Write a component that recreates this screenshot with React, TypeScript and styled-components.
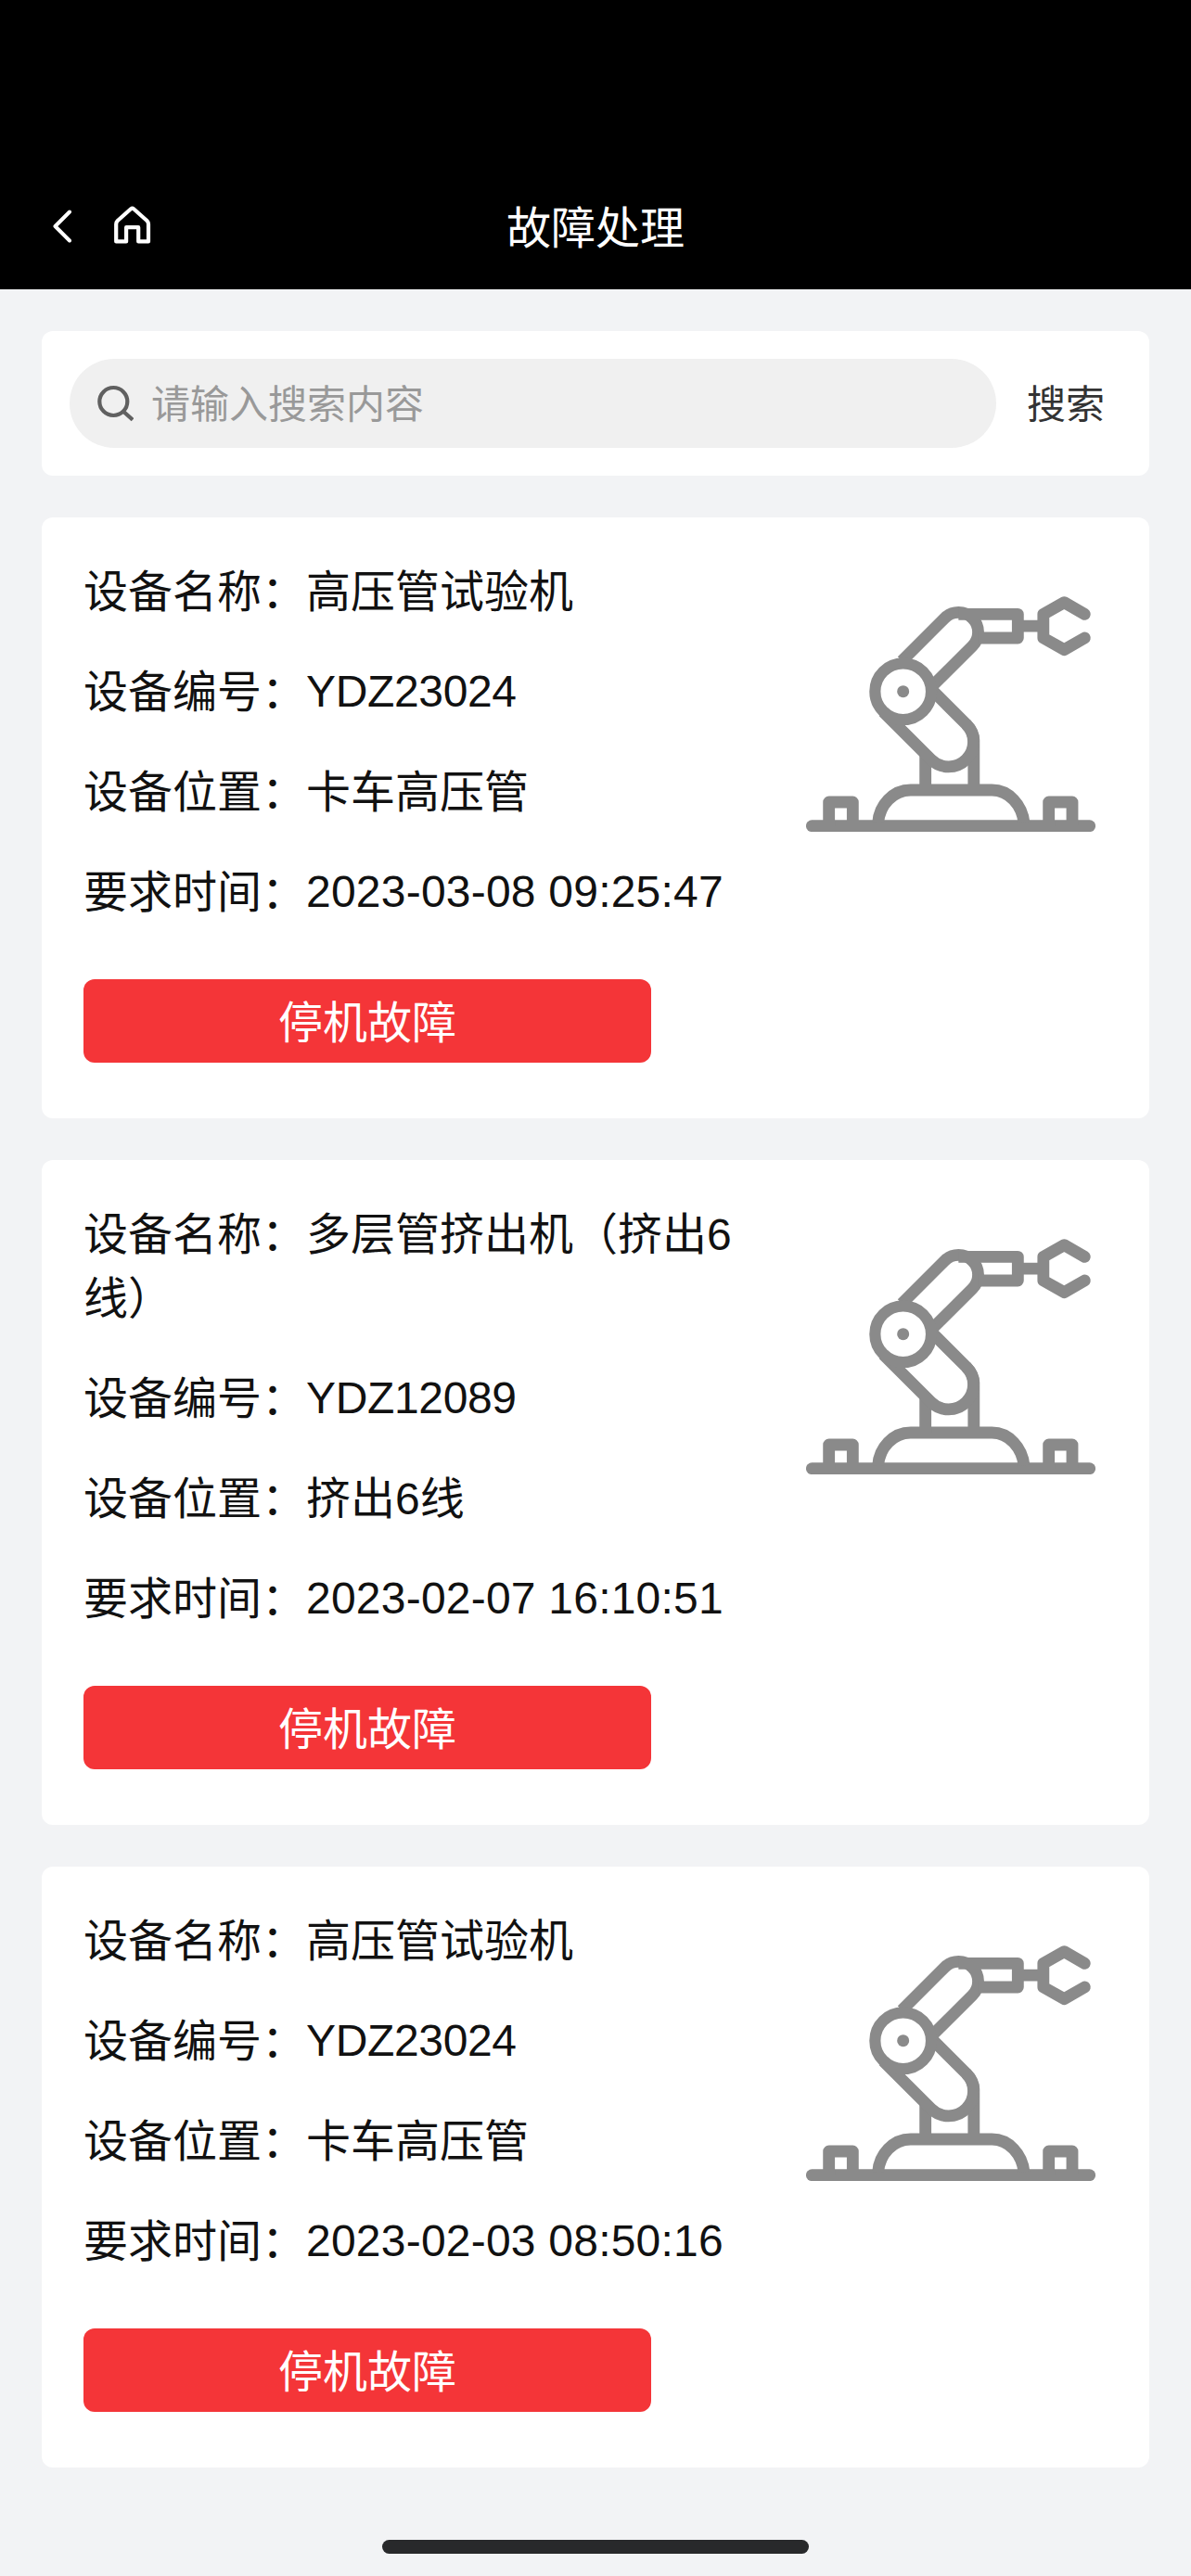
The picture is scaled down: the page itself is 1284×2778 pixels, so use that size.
import React from "react";
import styled, { createGlobalStyle } from "styled-components";

const GlobalStyle = createGlobalStyle`
  *, *::before, *::after { box-sizing: border-box; }
  body {
    margin: 0;
    background: #f2f3f5;
    font-family: "Liberation Sans", "Noto Sans CJK SC", sans-serif;
    color: #111;
  }
`;

const Page = styled.div`
  display: flex;
  flex-direction: column;
  width: 1284px;
  height: 2778px;
  background: #f2f3f5;
  overflow: hidden;
`;

const Header = styled.header`
  display: grid;
  grid-template-columns: 1fr auto 1fr;
  align-items: center;
  height: 312px;
  flex: none;
  padding: 180px 54px 0;
  background: #000;
  color: #fff;
`;

const HeaderActions = styled.nav`
  display: flex;
  align-items: center;
  gap: 41px;
  height: 132px;
  padding-bottom: 6px;
`;

const IconButton = styled.button`
  display: flex;
  padding: 0;
  border: 0;
  background: none;
  color: inherit;
`;

const Title = styled.h1`
  margin: 0;
  padding-top: 2px;
  font-size: 48px;
  font-weight: 400;
  line-height: 130px;
`;

const Content = styled.main`
  display: flex;
  flex-direction: column;
  flex: 1;
  gap: 45px;
  padding: 45px 45px 0;
`;

const Panel = styled.section`
  border-radius: 12px;
  background: #fff;
`;

const SearchPanel = styled(Panel)`
  display: flex;
  align-items: center;
  gap: 33px;
  height: 156px;
  padding: 0 48px 0 30px;
`;

const SearchField = styled.label`
  display: flex;
  align-items: center;
  flex: 1;
  gap: 19px;
  height: 96px;
  padding: 0 30px 0 27px;
  border-radius: 48px;
  background: #f0f0f0;
  color: #606060;
`;

const Placeholder = styled.span`
  padding-top: 3px;
  color: #999;
  font-size: 42px;
  line-height: 60px;
`;

const SearchButton = styled.button`
  padding: 3px 0 0;
  border: 0;
  background: none;
  color: #333;
  font: inherit;
  font-size: 42px;
  line-height: 60px;
`;

const Card = styled(Panel)`
  display: flex;
  justify-content: space-between;
  align-items: flex-start;
  padding: 45px 58px 60px 45px;
`;

const Details = styled.div`
  display: flex;
  flex-direction: column;
  width: 720px;
  gap: 39px;
`;

const Field = styled.p`
  margin: 0;
  font-size: 48px;
  line-height: 69px;
`;

const HanText = styled.span`
  line-height: 1;
  vertical-align: -1px;
`;

const Value = styled.span<{ $spacing: number }>`
  letter-spacing: ${(p) => p.$spacing}px;
`;

const StatusButton = styled.button`
  width: 612px;
  height: 90px;
  margin-top: 21px;
  padding: 6px 0 0;
  border: 0;
  border-radius: 12px;
  background: #f43538;
  color: #fff;
  font: inherit;
  font-size: 48px;
  line-height: 84px;
`;

const RobotDrawing = styled.svg`
  flex: none;
  width: 312px;
  height: 255px;
  margin-top: 39px;
`;

const HomeIndicator = styled.div`
  align-self: center;
  flex: none;
  width: 460px;
  height: 15px;
  margin-bottom: 24px;
  border-radius: 8px;
  background: #28292b;
`;

function BackIcon() {
  return (
    <svg width="27" height="39" viewBox="0 0 27 39" fill="none" stroke="currentColor" strokeWidth="4" strokeLinecap="round" strokeLinejoin="round">
      <path d="M21 4.5 5.5 20 21 35.5" />
    </svg>
  );
}

function HomeIcon() {
  return (
    <svg width="42" height="42" viewBox="0 0 42 42" fill="none" stroke="currentColor" strokeWidth="4.2" strokeLinejoin="round">
      <path d="M3.2 38.4V19.8Q3.2 17.6 4.8 16L19.1 3.3Q20.6 2.1 22.1 3.3L36.4 16Q38 17.6 38 19.8V38.4H27.2V23.2H14.1V38.4Z" />
    </svg>
  );
}

function SearchIcon() {
  return (
    <svg width="42" height="42" viewBox="0 0 42 42" fill="none" stroke="currentColor" strokeWidth="4.2">
      <circle cx="20.3" cy="19" r="15" />
      <path d="M30.5 29.2 41 38.8" />
    </svg>
  );
}

function RobotArm() {
  return (
    <RobotDrawing viewBox="87 96 936 765" fill="none" stroke="#8a8a8a" strokeWidth="38.5" strokeLinejoin="round">
      <path d="M106 842H1004" strokeLinecap="round" />
      <path d="M161 842V765H238V842M872 842V765H948V842" />
      <path d="M320 832C324 775 368 726 425 726H688C744 726 786 775 792 832" />
      <path d="M473 606V726M629.5 726V565Q629.5 538 605 513" />
      <path d="M337 473 491 627A80.61 80.61 0 0 0 605 513L488 396" />
      <path d="M397 308 535 170A63.5 63.5 0 0 1 625 260L488 397" />
      <circle cx="401" cy="407" r="91" strokeWidth="36.5" />
      <circle cx="401" cy="407" r="19.5" fill="#8a8a8a" stroke="none" />
      <path d="M580 157H772V234H644M780 195.5H856" />
      <path d="M988 157 922 119 854.5 157V234L922 272 988 234" strokeLinecap="round" />
    </RobotDrawing>
  );
}

interface Fault {
  name: string;
  code: string;
  location: string;
  time: string;
}

const faults: Fault[] = [
  { name: "高压管试验机", code: "YDZ23024", location: "卡车高压管", time: "2023-03-08 09:25:47" },
  { name: "多层管挤出机（挤出6线）", code: "YDZ12089", location: "挤出6线", time: "2023-02-07 16:10:51" },
  { name: "高压管试验机", code: "YDZ23024", location: "卡车高压管", time: "2023-02-03 08:50:16" },
];

function FaultCard({ fault }: { fault: Fault }) {
  return (
    <Card>
      <Details>
        <Field>
          <HanText>{`设备名称：${fault.name}`}</HanText>
        </Field>
        <Field>
          <HanText>设备编号：</HanText>
          <Value $spacing={-0.35}>{fault.code}</Value>
        </Field>
        <Field>
          <HanText>{`设备位置：${fault.location}`}</HanText>
        </Field>
        <Field>
          <HanText>要求时间：</HanText>
          <Value $spacing={0.22}>{fault.time}</Value>
        </Field>
        <StatusButton>停机故障</StatusButton>
      </Details>
      <RobotArm />
    </Card>
  );
}

export default function App() {
  return (
    <Page>
      <GlobalStyle />
      <Header>
        <HeaderActions>
          <IconButton aria-label="返回">
            <BackIcon />
          </IconButton>
          <IconButton aria-label="首页">
            <HomeIcon />
          </IconButton>
        </HeaderActions>
        <Title>故障处理</Title>
      </Header>
      <Content>
        <SearchPanel>
          <SearchField>
            <SearchIcon />
            <Placeholder>请输入搜索内容</Placeholder>
          </SearchField>
          <SearchButton>搜索</SearchButton>
        </SearchPanel>
        {faults.map((fault) => (
          <FaultCard key={fault.time} fault={fault} />
        ))}
      </Content>
      <HomeIndicator />
    </Page>
  );
}
